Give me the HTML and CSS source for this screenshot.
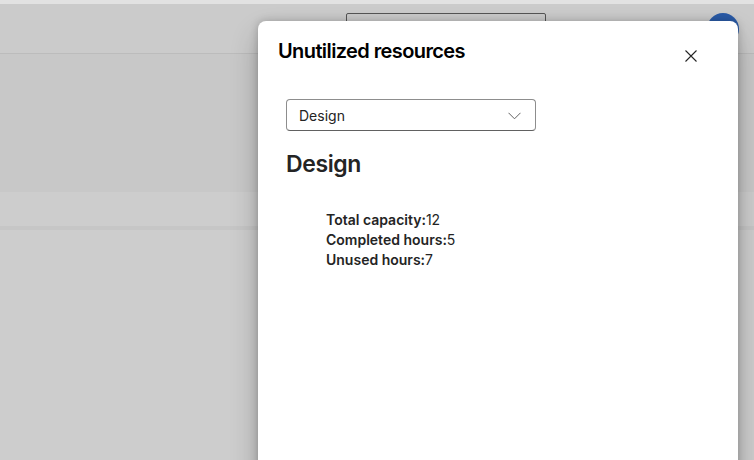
FILE: index.html
```html
<!DOCTYPE html>
<html>
<head>
<meta charset="utf-8">
<link rel="stylesheet" href="styles.css">
</head>
<body>
<div class="page">
  <div class="topstrip"></div>
  <header class="header">
    <div class="search"></div>
    <div class="avatar"></div>
  </header>
  <section class="band"></section>
  <section class="tabs"></section>
  <div class="rule"></div>
  <section class="rest"></section>
</div>
<div class="dialog">
  <div class="dialog-head">
    <h1 class="dialog-title">Unutilized resources</h1>
    <button class="close" aria-label="Close">
      <svg width="12" height="12" viewBox="0 0 12 12"><path d="M0.5 0.5L11.5 11.5M11.5 0.5L0.5 11.5" stroke="#242424" stroke-width="1.1" fill="none"/></svg>
    </button>
  </div>
  <div class="dialog-body">
    <div class="dropdown">
      <span class="dropdown-text">Design</span>
      <svg class="chev" width="13" height="8" viewBox="0 0 13 8"><path d="M0.5 0.8L6.5 6.8L12.5 0.8" stroke="#616161" stroke-width="1" fill="none"/></svg>
    </div>
    <h2 class="group-title">Design</h2>
    <ul class="stats">
      <li><b>Total capacity:</b>12</li>
      <li><b>Completed hours:</b>5</li>
      <li><b>Unused hours:</b>7</li>
    </ul>
  </div>
</div>
</body>
</html>
```
FILE: styles.css
```css
* { box-sizing: border-box; }
html, body { margin: 0; padding: 0; }
body {
  width: 754px;
  height: 460px;
  overflow: hidden;
  font-family: Inter, "Noto Sans", sans-serif;
  background: #cdcdcd;
  position: relative;
}
.page { display: flex; flex-direction: column; height: 460px; }
.topstrip { height: 4px; background: #e2e2e2; }
.header {
  height: 50px;
  background: #cbcbcb;
  border-bottom: 1px solid #bcbcbc;
  position: relative;
}
.search {
  position: absolute;
  left: 346px; top: 9px;
  width: 200px; height: 32px;
  border: 1px solid #555;
  border-radius: 2px;
}
.avatar {
  position: absolute;
  left: 707px; top: 9px;
  width: 32px; height: 32px;
  border-radius: 50%;
  background: #2a5ba7;
}
.band { height: 138px; background: #c8c8c8; }
.tabs { height: 34px; background: #cdcdcd; }
.rule { height: 4px; background: #c6c6c6; }
.rest { flex: 1; background: #cdcdcd; }

.dialog {
  position: absolute;
  left: 258px; top: 21px;
  width: 480px; height: 460px;
  background: #fff;
  border-radius: 8px;
  box-shadow: 0 0 8px rgba(0,0,0,0.22), 0 14px 28px rgba(0,0,0,0.24);
  padding: 16px 20px 0 20px;
}
.dialog-head { display: flex; justify-content: space-between; align-items: flex-start; }
.dialog-title {
  margin: 0;
  font-size: 20px;
  font-weight: 600;
  line-height: 28px;
  letter-spacing: -0.6px;
  color: #000;
}
.close {
  border: 0; background: none; padding: 0;
  width: 12px; height: 12px;
  margin: 13px 21px 0 0;
  display: flex;
}
.dialog-body { padding: 34px 8px 0 8px; }
.dropdown {
  width: 250px; height: 32px;
  border: 1px solid #8d8d8d;
  border-bottom-color: #616161;
  border-radius: 4px;
  display: flex; align-items: center; justify-content: space-between;
  padding: 0 14px 0 12px;
}
.dropdown-text { font-size: 14px; color: #242424; }
.chev { margin-top: 1px; }
.group-title {
  margin: 18px 0 0 0;
  font-size: 23px;
  font-weight: 600;
  line-height: 30px;
  color: #242424;
  letter-spacing: -0.4px;
}
.stats {
  list-style: none;
  margin: 31px 0 0 0;
  padding: 0 0 0 40px;
  font-size: 14px;
  line-height: 20px;
  color: #242424;
}
.stats b { font-weight: 600; }
```
